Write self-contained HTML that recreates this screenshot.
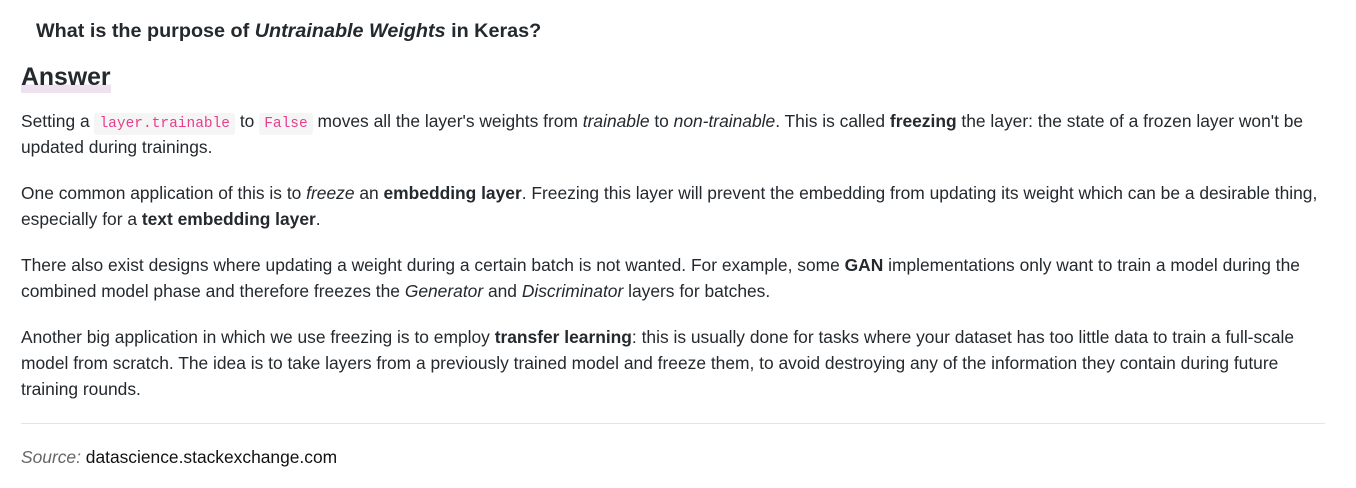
<!DOCTYPE html>
<html><head><meta charset="utf-8"><style>
body{margin:0;background:#fff;font-family:"Liberation Sans",Arial,sans-serif;color:#222;width:1356px;height:488px;overflow:hidden;position:relative}
.q{position:absolute;left:36px;top:20px;font-size:19.8px;font-weight:bold;color:#24292e}
.a{position:absolute;left:21px;top:63px;font-size:24.8px;font-weight:bold;color:#24292e;line-height:30px;background:linear-gradient(transparent 72%,#efe2f0 72%)}
.p{position:absolute;left:21px;font-size:17.4px;line-height:26px;white-space:nowrap;color:#24292e}
code{font-family:"Liberation Mono",monospace;font-size:14.5px;line-height:1;color:#e83e8c;background:#f5f5f5;padding:3px 5px;border-radius:3px}
hr{position:absolute;left:21px;top:423px;width:1304px;margin:0;border:0;border-top:1px solid #e4e4e4}
.s{position:absolute;left:21px;top:447px;font-size:17.4px;color:#111}
.s i{color:#666}
</style></head><body>
<div class="q">What is the purpose of <i>Untrainable Weights</i> in Keras?</div>
<div class="a">Answer</div>
<div class="p" style="top:108px">Setting a <code>layer.trainable</code> to <code>False</code> moves all the layer's weights from <i>trainable</i> to <i>non-trainable</i>. This is called <b>freezing</b> the layer: the state of a frozen layer won't be<br>updated during trainings.</div>
<div class="p" style="top:180px">One common application of this is to <i>freeze</i> an <b>embedding layer</b>. Freezing this layer will prevent the embedding from updating its weight which can be a desirable thing,<br>especially for a <b>text embedding layer</b>.</div>
<div class="p" style="top:252px">There also exist designs where updating a weight during a certain batch is not wanted. For example, some <b>GAN</b> implementations only want to train a model during the<br>combined model phase and therefore freezes the <i>Generator</i> and <i>Discriminator</i> layers for batches.</div>
<div class="p" style="top:324px">Another big application in which we use freezing is to employ <b>transfer learning</b>: this is usually done for tasks where your dataset has too little data to train a full-scale<br>model from scratch. The idea is to take layers from a previously trained model and freeze them, to avoid destroying any of the information they contain during future<br>training rounds.</div>
<hr>
<div class="s"><i>Source:</i> datascience.stackexchange.com</div>
</body></html>
